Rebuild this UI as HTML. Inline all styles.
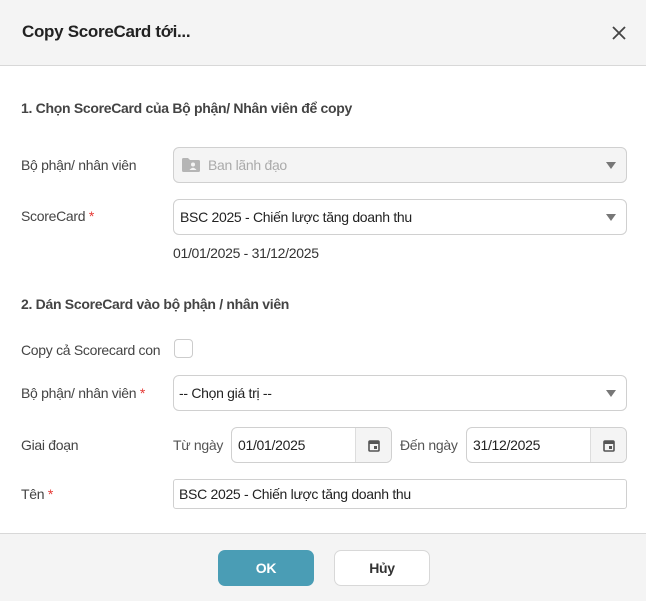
<!DOCTYPE html>
<html><head><meta charset="utf-8"><style>
*{box-sizing:border-box;margin:0;padding:0}
body{width:646px;height:601px;background:#fff;font-family:"Liberation Sans",sans-serif;font-size:14px;color:#333;position:relative;overflow:hidden;letter-spacing:-0.3px}
.a{position:absolute}
.hdr{left:0;top:0;width:646px;height:66px;background:#f4f4f4;border-bottom:1px solid #d8d8d8}
.ftr{left:0;top:533px;width:646px;height:68px;background:#f4f4f4;border-top:1px solid #d8d8d8}
.lbl{color:#444;font-size:14px}
.req{color:#e53935}
.box{border:1px solid #d0d0d0;border-radius:6px;background:#fff;height:36px;display:flex;align-items:center;padding-left:6px;color:#222}
.arr{position:absolute;right:10px;top:14px;width:0;height:0;border-left:5px solid transparent;border-right:5px solid transparent;border-top:7px solid #777}
.btn{height:36px;border-radius:7px;display:flex;align-items:center;justify-content:center;font-weight:bold}
.cal{position:absolute;right:0;top:0;width:36px;height:34px;border-left:1px solid #ddd;background:#f4f4f4;border-radius:0 6px 6px 0;display:flex;align-items:center;justify-content:center}
</style></head><body>
<div class="a hdr"></div>
<div class="a" style="left:22px;top:22px;font-size:17px;font-weight:bold;color:#222">Copy ScoreCard tới...</div>
<svg class="a" style="left:611px;top:25px" width="16" height="16" viewBox="0 0 16 16"><path d="M2 2L14 14M14 2L2 14" stroke="#444" stroke-width="1.8"/></svg>

<div class="a lbl" style="left:21px;top:100px;font-weight:bold">1. Chọn ScoreCard của Bộ phận/ Nhân viên để copy</div>

<div class="a lbl" style="left:21px;top:157px">Bộ phận/ nhân viên</div>
<div class="a box" style="left:173px;top:147px;width:454px;background:#f4f4f4;color:#aaa;padding-left:8px">
<svg width="18" height="14" viewBox="0 0 18 14" style="margin-right:8px"><path d="M0 1.5Q0 0 1.5 0H6L8 2H16.5Q18 2 18 3.5V12.5Q18 14 16.5 14H1.5Q0 14 0 12.5Z" fill="#b5b5b5"/><circle cx="11" cy="6.5" r="2" fill="#f4f4f4"/><path d="M7.5 12Q11 7.5 14.5 12Z" fill="#f4f4f4"/></svg>Ban lãnh đạo<span class="arr"></span></div>

<div class="a lbl" style="left:21px;top:208px">ScoreCard <span class="req">*</span></div>
<div class="a box" style="left:173px;top:199px;width:454px">BSC 2025 - Chiến lược tăng doanh thu<span class="arr"></span></div>
<div class="a" style="left:173px;top:245px;color:#333">01/01/2025 - 31/12/2025</div>

<div class="a lbl" style="left:21px;top:296px;font-weight:bold">2. Dán ScoreCard vào bộ phận / nhân viên</div>

<div class="a lbl" style="left:21px;top:342px">Copy cả Scorecard con</div>
<div class="a" style="left:174px;top:339px;width:19px;height:19px;border:1px solid #ccc;border-radius:4px"></div>

<div class="a lbl" style="left:21px;top:385px">Bộ phận/ nhân viên <span class="req">*</span></div>
<div class="a box" style="left:173px;top:375px;width:454px;padding-left:5px">-- Chọn giá trị --<span class="arr"></span></div>

<div class="a lbl" style="left:21px;top:437px">Giai đoạn</div>
<div class="a" style="left:173px;top:437px;color:#555">Từ ngày</div>
<div class="a box" style="left:231px;top:427px;width:161px">01/01/2025<span class="cal"><svg width="12" height="13" viewBox="0 0 12 13"><rect x="1" y="2" width="10" height="10" rx="1" fill="none" stroke="#555" stroke-width="1.6"/><rect x="1" y="2" width="10" height="3" fill="#555"/><rect x="6" y="7" width="3" height="3" fill="#555"/></svg></span></div>
<div class="a" style="left:400px;top:437px;color:#555">Đến ngày</div>
<div class="a box" style="left:466px;top:427px;width:161px">31/12/2025<span class="cal"><svg width="12" height="13" viewBox="0 0 12 13"><rect x="1" y="2" width="10" height="10" rx="1" fill="none" stroke="#555" stroke-width="1.6"/><rect x="1" y="2" width="10" height="3" fill="#555"/><rect x="6" y="7" width="3" height="3" fill="#555"/></svg></span></div>

<div class="a lbl" style="left:21px;top:486px">Tên <span class="req">*</span></div>
<div class="a box" style="left:173px;top:479px;width:454px;height:30px;border-radius:3px;padding-left:5px">BSC 2025 - Chiến lược tăng doanh thu</div>

<div class="a ftr"></div>
<div class="a btn" style="left:218px;top:550px;width:96px;background:#4a9db5;color:#fff">OK</div>
<div class="a btn" style="left:334px;top:550px;width:96px;background:#fff;border:1px solid #d8d8d8;color:#333">Hủy</div>
</body></html>
